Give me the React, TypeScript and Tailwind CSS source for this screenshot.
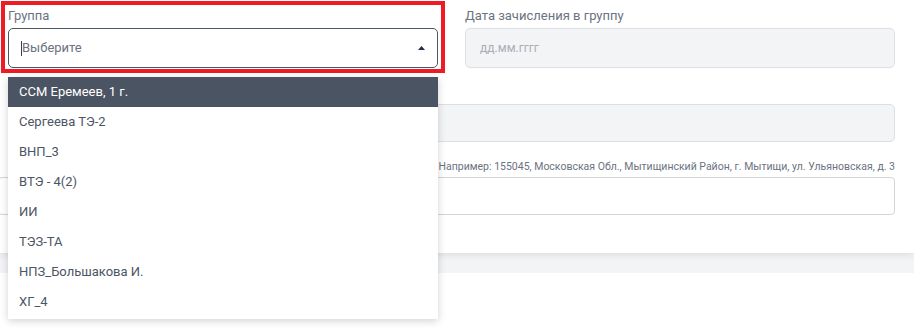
// Group select form — enrolment fields with an open group dropdown.

const groups = [
  "ССМ Еремеев, 1 г.",
  "Сергеева ТЭ-2",
  "ВНП_3",
  "ВТЭ - 4(2)",
  "ИИ",
  "ТЭЗ-ТА",
  "НПЗ_Большакова И.",
  "ХГ_4",
];

function GroupSelect() {
  return (
    <div className="relative">
      <div className="border-4 border-[#ed1c24] -mx-[7px] -mt-[7px] px-[3px] pt-[3px] pb-[1px]">
        <label className="block text-[13px] leading-[16px] text-[#6b7280] mb-[4px]">Группа</label>
        <div className="h-[40px] border border-[#4b5563] rounded-[5px] bg-white flex items-center pl-[12px] pr-[14px]">
          <span className="w-px h-[15px] bg-[#374151]" />
          <span className="flex-1 text-[13px] text-[#6b7280]">Выберите</span>
          <svg width="7" height="4" viewBox="0 0 7 4" className="-mr-[2px]">
            <path d="M0 4 L3.5 0 L7 4 Z" fill="#1f2d4d" />
          </svg>
        </div>
      </div>

      <ul className="absolute left-0 right-0 top-[69px] bg-white shadow-[0_2px_8px_rgba(0,0,0,0.18)] pb-[2px] z-10">
        {groups.map((g, i) => (
          <li
            key={g}
            className={
              i === 0
                ? "h-[30px] px-[11px] flex items-center text-[13px] text-white bg-[#4b5462]"
                : "h-[30px] px-[11px] flex items-center text-[13px] text-[#4b5563]"
            }
          >
            {g}
          </li>
        ))}
      </ul>
    </div>
  );
}

export default function App() {
  return (
    <div className="w-[914px] h-[334px] bg-white overflow-hidden" style={{ fontFamily: "Roboto, 'Liberation Sans', sans-serif" }}>
      <div className="bg-white shadow-[0_3px_6px_rgba(0,0,0,0.08)] pl-[8px] pr-[19px] pt-[8px] pb-[38px] relative">
        <div className="grid grid-cols-2 gap-[27px]">
          <GroupSelect />
          <div>
            <label className="block text-[13px] leading-[16px] text-[#6b7280] mb-[4px]">Дата зачисления в группу</label>
            <div className="h-[40px] border border-[#dcdfe4] rounded-[5px] bg-[#f3f4f6] flex items-center px-[14px]">
              <span className="text-[12px] text-[#a9aeb6]">дд.мм.гггг</span>
            </div>
          </div>
        </div>

        <div className="mt-[31px]">
          <div className="h-[38px] border border-[#dcdfe4] rounded-[5px] bg-[#f3f4f6]" />
        </div>

        <div className="mt-[18px]">
          <p className="text-[10.5px] leading-[14px] text-[#6b7280] text-right whitespace-nowrap">
            Например: 155045, Московская Обл., Мытищинский Район, г. Мытищи, ул. Ульяновская, д. 3
          </p>
          <div className="h-[38px] mt-[3px] -ml-[10px] border border-[#d1d5db] rounded-[4px] bg-white" />
        </div>
      </div>
      <div className="h-[20px] bg-[#f3f4f6]" />
    </div>
  );
}
